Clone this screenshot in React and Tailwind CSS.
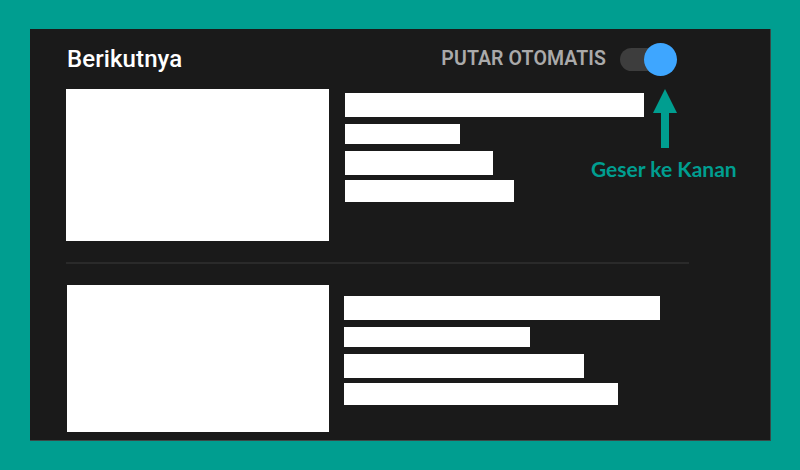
const rows = [
  {
    thumb: 'w-[263px] h-[152px]',
    gap: 'ml-[16px] pt-[4px]',
    bars: [
      'w-[299px] h-[24px]',
      'w-[115px] h-[20px] mt-[7px]',
      'w-[148px] h-[24px] mt-[7px]',
      'w-[169px] h-[22px] mt-[5px]',
    ],
  },
  {
    thumb: 'w-[262px] h-[147px] ml-[1px]',
    gap: 'ml-[15px] pt-[11px]',
    bars: [
      'w-[316px] h-[24px]',
      'w-[186px] h-[20px] mt-[7px]',
      'w-[240px] h-[24px] mt-[7px]',
      'w-[274px] h-[22px] mt-[5px]',
    ],
  },
]

function Row({ row }) {
  return (
    <div className="flex items-start">
      <div className={`${row.thumb} bg-white`} />
      <div className={`flex flex-col ${row.gap}`}>
        {row.bars.map((b, i) => (
          <div key={i} className={`${b} bg-white`} />
        ))}
      </div>
    </div>
  )
}

export default function App() {
  return (
    <div className="w-[800px] h-[470px] bg-[#009e90] pt-[29px] pl-[30px]">
      <div className="relative w-[741px] h-[412px] bg-[#1a1a1a] pl-[36px] border-r border-b border-[#3a4a48]">
        <div className="flex items-center h-[60px] w-[611px]" style={{ fontFamily: 'Roboto, sans-serif' }}>
          <span className="text-[24px] font-medium text-white leading-none ml-[1px] tracking-[0.1px]">Berikutnya</span>
          <span className="ml-auto text-[19.5px] font-semibold text-[#aaaaaa] leading-none tracking-[0.1px]">PUTAR OTOMATIS</span>
          <div className="relative ml-[14px] w-[57px] h-[33px] flex items-center">
            <div className="w-[48px] h-[23px] rounded-full bg-[#3d3d3d]" />
            <div className="absolute right-0 top-0 w-[33px] h-[33px] rounded-full bg-[#3ea6ff]" />
          </div>
        </div>

        <Row row={rows[0]} />
        <div className="w-[623px] h-[2px] bg-[#2a2a2a] mt-[21px] mb-[21px]" />
        <Row row={rows[1]} />

        <svg className="absolute left-[623px] top-[60px]" width="24" height="60" viewBox="0 0 24 60">
          <polygon points="12,0 24,24 0,24" fill="#009e90" />
          <rect x="8" y="23" width="8" height="36" fill="#009e90" />
        </svg>
        <div
          className="absolute left-[561px] top-[129px] text-[21px] font-bold text-[#009e90] leading-none whitespace-nowrap"
          style={{ fontFamily: 'Lato, sans-serif' }}
        >
          Geser ke Kanan
        </div>
      </div>
    </div>
  )
}
